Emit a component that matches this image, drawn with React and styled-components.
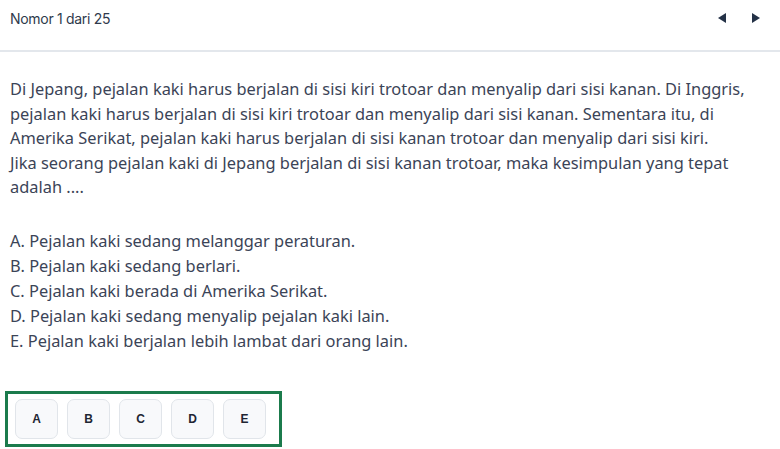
import React from "react";
import styled, { createGlobalStyle } from "styled-components";

const Global = createGlobalStyle`
  html, body { margin: 0; padding: 0; background: #fff; }
  body { font-family: "Noto Sans", "Open Sans", sans-serif; }
`;

const Page = styled.div`
  width: 780px;
  height: 449px;
  display: flex;
  flex-direction: column;
  overflow: hidden;
`;

const Header = styled.div`
  height: 52px;
  flex-shrink: 0;
  display: flex;
  align-items: center;
  justify-content: space-between;
  padding: 0 18px 14px 10px;
  box-sizing: border-box;
  border-bottom: 2px solid #e3e7ec;
`;

const Counter = styled.span`
  font-family: Inter, "Noto Sans", sans-serif;
  font-size: 14px;
  color: #2f3a4c;
  letter-spacing: -0.3px;
`;

const Nav = styled.div`
  display: flex;
  gap: 22px;
  align-items: center;
`;

const NavBtn = styled.button`
  border: none;
  background: none;
  padding: 0;
  width: 12px;
  height: 12px;
  display: flex;
  align-items: center;
  justify-content: center;
  cursor: pointer;
`;

const Body = styled.div`
  padding: 25px 10px 0 10px;
  color: #3b4457;
  font-size: 16.4px;
`;

const Question = styled.p`
  margin: 0;
  line-height: 24.5px;
  white-space: nowrap;
`;

const Options = styled.ol`
  list-style: none;
  margin: 28px 0 0 0;
  padding: 0;
`;

const Option = styled.li`
  line-height: 25px;
`;

const AnswerBox = styled.div`
  margin: 38px 0 0 5px;
  width: 277px;
  height: 56px;
  flex-shrink: 0;
  box-sizing: border-box;
  border: 3px solid #1b7b4c;
  display: flex;
  align-items: center;
  gap: 9px;
  padding: 0 0 0 7px;
`;

const AnswerBtn = styled.button`
  width: 43px;
  height: 40px;
  border: 1px solid #e1e5ea;
  border-radius: 7px;
  background: #f8f9fb;
  font-family: "Liberation Sans", Arial, sans-serif;
  font-weight: 700;
  font-size: 12px;
  color: #1f2633;
  padding: 0;
  cursor: pointer;
`;

const Triangle = ({ dir }) => (
  <svg width="8" height="10" viewBox="0 0 8 10">
    {dir === "left" ? (
      <path d="M8 0 L0 5 L8 10 Z" fill="#243247" />
    ) : (
      <path d="M0 0 L8 5 L0 10 Z" fill="#243247" />
    )}
  </svg>
);

const questionLines = [
  "Di Jepang, pejalan kaki harus berjalan di sisi kiri trotoar dan menyalip dari sisi kanan. Di Inggris,",
  "pejalan kaki harus berjalan di sisi kiri trotoar dan menyalip dari sisi kanan. Sementara itu, di",
  "Amerika Serikat, pejalan kaki harus berjalan di sisi kanan trotoar dan menyalip dari sisi kiri.",
  "Jika seorang pejalan kaki di Jepang berjalan di sisi kanan trotoar, maka kesimpulan yang tepat",
  "adalah ....",
];

const options = [
  "A. Pejalan kaki sedang melanggar peraturan.",
  "B. Pejalan kaki sedang berlari.",
  "C. Pejalan kaki berada di Amerika Serikat.",
  "D. Pejalan kaki sedang menyalip pejalan kaki lain.",
  "E. Pejalan kaki berjalan lebih lambat dari orang lain.",
];

export default function App() {
  return (
    <>
      <Global />
      <Page>
        <Header>
          <Counter>Nomor 1 dari 25</Counter>
          <Nav>
            <NavBtn aria-label="Sebelumnya"><Triangle dir="left" /></NavBtn>
            <NavBtn aria-label="Berikutnya"><Triangle dir="right" /></NavBtn>
          </Nav>
        </Header>
        <Body>
          <Question>
            {questionLines.map((l, i) => (
              <React.Fragment key={i}>
                {l}
                {i < questionLines.length - 1 && <br />}
              </React.Fragment>
            ))}
          </Question>
          <Options>
            {options.map((o) => (
              <Option key={o}>{o}</Option>
            ))}
          </Options>
        </Body>
        <AnswerBox>
          {["A", "B", "C", "D", "E"].map((l) => (
            <AnswerBtn key={l}>{l}</AnswerBtn>
          ))}
        </AnswerBox>
      </Page>
    </>
  );
}
